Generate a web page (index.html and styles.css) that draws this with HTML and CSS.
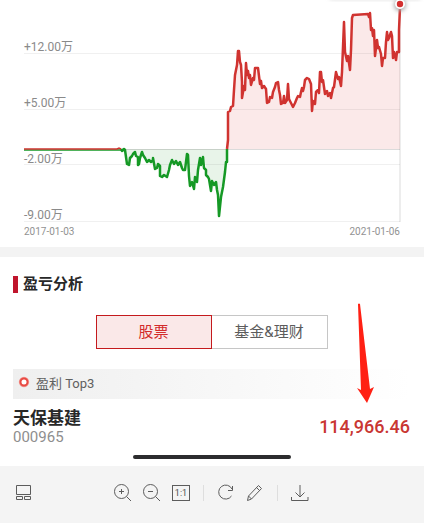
FILE: index.html
```html
<!DOCTYPE html>
<html lang="zh-CN">
<head>
<meta charset="utf-8">
<meta name="viewport" content="width=device-width, initial-scale=1">
<title>盈亏分析</title>
<link rel="stylesheet" href="styles.css">
</head>
<body>
<main>
  <section class="trend">
    <svg class="chart" viewBox="0 0 424 224" role="img" aria-label="收益走势">
      <defs>
        <filter id="soft" x="-100%" y="-100%" width="300%" height="300%"><feGaussianBlur stdDeviation="2"/></filter>
      </defs>
      <path d="M227 149L228 140L228 112L231 107L233 106L234 90L235 75L237 65L238 51L240 62L241 65L242 98L244 86L246 63L248 72L251 85L253 78L255 68L258 68L260 84L266 89L267 103L270 97L278 82L281 104L285 103L288 84L289 99L293 107L297 98L301 92L307 79L310 82L312 111L315 104L318 90L320 72L325 94L331 98L336 72L341 86L344 22L345 52L350 70L353 15L370 14L375 56L377 40L382 66L385 58L386 32L389 38L391 32L393 58L396 60L400 7V149Z" fill="#fbe9e9"/>
      <path d="M124 149L128 165L135 152L138 165L142 152L147 162L153 158L155 169L159 164L160 176L168 175L172 160L180 163L185 170L186 154L190 185L194 189L199 164L204 157L211 191L216 182L219 216L227 162V149Z" fill="#e8f4e9"/>
      <path class="grid-line" d="M24 53.500H400M24 109.500H400M24 164.500H400M24 221.500H400"/>
      <path class="axis-line" d="M125 149.500H400M400 8V222"/>
      <path d="M24 150H121" stroke="#159925" stroke-width="1.500"/>
      <path class="line loss" d="M121 149L122 151L124 149L125 150L126 157L127 164L129 165L130 158L132 156L133 154L135 152L136 156L138 157L138 165L139 164L140 158L142 152L143 155L145 158L147 162L149 160L151 162L153 160L153 158L155 169L157 168L158 164L160 166L160 176L162 177L164 175L167 177L169 170L170 165L172 160L174 164L176 161L178 165L180 162L182 168L183 170L185 170L187 154L188 155L189 176L190 186L192 182L194 189L195 177L197 182L198 170L200 158L201 165L203 157L204 168L206 170L206 175L208 177L209 179L211 191L212 181L214 185L216 182L217 190L218 195L219 216L221 197L223 187L225 172L226 162L227 162L227 149"/>
      <path class="line gain" d="M227 149L228 140L228 112L230 111L231 107L233 106L234 90L235 75L237 65L238 51L239 51L240 62L241 65L242 82L242 98L244 86L245 90L246 63L247 75L248 71L249 78L250 75L251 85L253 78L254 80L255 68L258 68L259 76L260 84L261 81L262 88L264 86L266 89L267 103L269 102L270 97L272 98L273 92L275 87L276 83L278 82L279 90L280 95L281 104L283 103L284 96L285 103L287 100L288 84L289 99L291 103L293 107L295 103L297 98L298 96L300 97L301 92L302 88L303 91L304 87L305 80L307 78L309 79L311 84L312 111L313 101L315 104L316 92L318 90L319 93L320 72L321 72L322 82L323 80L325 94L327 91L328 96L330 93L331 98L333 88L334 87L336 72L338 79L339 77L341 86L342 72L344 22L345 52L347 61L348 56L350 70L351 50L352 18L353 15L368 14L369 17L370 13L371 30L372 28L373 36L374 30L375 56L377 40L378 48L379 47L381 54L382 66L383 58L385 58L386 42L387 32L388 40L389 38L391 32L392 36L393 58L394 52L396 60L397 52L399 52L399 30L400 7"/>
      <path d="M24 149H117L119 148L121 149" stroke="#d03330" stroke-width="1.500"/>
      <rect x="330" y="-4" width="90" height="3" fill="#ccc" filter="url(#soft)"/>
      <circle cx="400" cy="5" r="6" fill="#aaa" filter="url(#soft)"/>
      <circle cx="400" cy="4" r="5" fill="#fff"/>
      <circle cx="400" cy="4" r="3.200" fill="#d32f2f"/>
      <g class="scale">
        <text x="24" y="51">+12.00万</text>
        <text x="24" y="107">+5.00万</text>
        <text x="24" y="163">-2.00万</text>
        <text x="24" y="219">-9.00万</text>
      </g>
    </svg>
    <div class="dates"><time>2017-01-03</time><time>2021-01-06</time></div>
  </section>

  <section class="analysis">
    <h1>盈亏分析</h1>
    <div class="tabs">
      <button type="button" class="tab active" aria-pressed="true">股票</button>
      <button type="button" class="tab" aria-pressed="false">基金&amp;理财</button>
    </div>
    <h2>
      <svg width="12" height="12" viewBox="0 0 12 12" aria-hidden="true"><circle cx="6" cy="6" r="3.700" fill="#fff" stroke="#f3a29c" stroke-width="3"/><circle cx="6" cy="6" r="3.500" fill="#fff" stroke="#e84a43" stroke-width="2"/></svg>
      盈利 Top3
    </h2>
    <div class="stock">
      <div>
        <h3>天保基建</h3>
        <p class="code">000965</p>
      </div>
      <strong class="profit">114,966.46</strong>
    </div>
    <div class="home-bar"></div>
    <svg class="arrow" width="20" height="102" viewBox="0 0 20 102" aria-hidden="true"><path d="M2 2Q3 1 4 2L14 87L18 85L11 101L1 86L5 88Z" fill="#ff2014"/></svg>
  </section>
</main>

<footer class="toolbar">
  <button type="button" aria-label="缩略图">
    <svg viewBox="0 0 18 18"><path d="M1.500 1.500H15.500V10.500H1.500ZM1.500 12.500H7.500V15.500H1.500ZM9.500 12.500H15.500V15.500H9.500Z"/></svg>
  </button>
  <div class="tools">
    <button type="button" aria-label="放大">
      <svg viewBox="0 0 18 18"><circle cx="7.500" cy="7.500" r="7"/><path d="M5 7.500H10M7.500 5V10M12.500 12.500L17 17"/></svg>
    </button>
    <button type="button" aria-label="缩小">
      <svg viewBox="0 0 18 18"><circle cx="7.500" cy="7.500" r="7"/><path d="M5 7.500H10M12.500 12.500L17 17"/></svg>
    </button>
    <button type="button" class="actual" aria-label="原始大小">1:1</button>
    <span class="divider"></span>
    <button type="button" aria-label="旋转">
      <svg viewBox="0 0 18 18"><path d="M15 5A7 7 0 1 0 14.500 12M15.500 2V6.500H11"/></svg>
    </button>
    <button type="button" aria-label="编辑">
      <svg viewBox="0 0 18 18"><path d="M1.500 16.500L2.500 12L12.500 1.500L15.500 4.500L5.500 15ZM10.500 3.500L13.500 6.500M2.500 12L5.500 15"/></svg>
    </button>
    <span class="divider"></span>
    <button type="button" aria-label="下载">
      <svg viewBox="0 0 18 18"><path d="M9 1V12.500M4.500 8.500L9 13L13.500 8.500M.500 13V16.500H17V13"/></svg>
    </button>
  </div>
</footer>
</body>
</html>
```
FILE: styles.css
```css
* {
  box-sizing: border-box;
}

body {
  margin: 0;
  min-height: 100vh;
  display: flex;
  flex-direction: column;
  background: #fff;
  color: #282828;
  font-family: Roboto, "Noto Sans CJK SC", sans-serif;
}

h1, h2, h3, p {
  margin: 0;
}

button {
  padding: 0;
  border: 0;
  background: none;
  font-family: inherit;
}

.trend {
  border-bottom: 10px solid #f3f3f3;
}

.chart {
  display: block;
  width: 100%;
  fill: none;
}

.grid-line {
  stroke: #000;
  stroke-opacity: .06;
}

.axis-line {
  stroke: #000;
  stroke-opacity: .14;
}

.line {
  stroke-width: 2.5;
  stroke-linejoin: round;
}

.gain {
  stroke: #d03330;
}

.loss {
  stroke: #159925;
}

.scale {
  fill: #8a8a8a;
  font-size: 12px;
}

.dates {
  display: flex;
  justify-content: space-between;
  padding: 0 24px 7px;
  color: #929292;
  font-size: 10px;
  line-height: 16px;
}

.analysis {
  position: relative;
  padding: 16px 14px 7px 13px;
}

h1 {
  display: flex;
  align-items: center;
  gap: 5px;
  font-size: 15px;
  line-height: 22px;
}

h1::before {
  content: "";
  width: 5px;
  height: 17px;
  background: #c0152d;
}

.tabs {
  display: flex;
  width: 232px;
  height: 34px;
  margin: 20px auto;
}

.tab {
  flex: 1 1 50%;
  border: 1px solid #c6c6c6;
  border-left: 0;
  color: #5c5c5c;
  font-size: 15px;
  line-height: 22px;
}

.tab.active {
  border: 1px solid #c41a1d;
  background: #fae8e8;
  color: #d32b2b;
}

h2 {
  display: flex;
  align-items: center;
  gap: 6px;
  height: 30px;
  padding: 0 5px 4px;
  background: linear-gradient(90deg, #efefef, #fff);
  color: #606060;
  font-size: 13px;
  font-weight: 400;
}

.stock {
  display: flex;
  justify-content: space-between;
  align-items: center;
  margin-top: 8px;
}

h3 {
  font-size: 17px;
  line-height: 22px;
}

.code {
  color: #8e8e8e;
  font-size: 15px;
  line-height: 16px;
}

.profit {
  color: #c93632;
  font-size: 18px;
  font-weight: 500;
}

.home-bar {
  width: 158px;
  height: 4px;
  margin: 10px auto 0;
  border-radius: 2px;
  background: #2c2c2e;
}

.arrow {
  position: absolute;
  right: 48px;
  top: 45px;
}

.toolbar {
  flex: 1;
  display: grid;
  grid-template-columns: 1fr auto 1fr;
  align-items: start;
  min-height: 57px;
  padding: 18px 16px 18px 15px;
  background: #f4f4f4;
}

.toolbar button {
  width: 18px;
  height: 18px;
}

.toolbar svg {
  display: block;
  width: 18px;
  height: 18px;
  fill: none;
  stroke: #5c5c5c;
  stroke-width: 1;
}

.tools {
  display: flex;
  gap: 11px;
}

.toolbar .actual {
  height: 16px;
  margin-top: 1px;
  border: 1px solid #5c5c5c;
  color: #505050;
  font-size: 9px;
  line-height: 14px;
}

.divider {
  width: 1px;
  height: 16px;
  margin: 1px 2px 0;
  background: #dedede;
}
```
